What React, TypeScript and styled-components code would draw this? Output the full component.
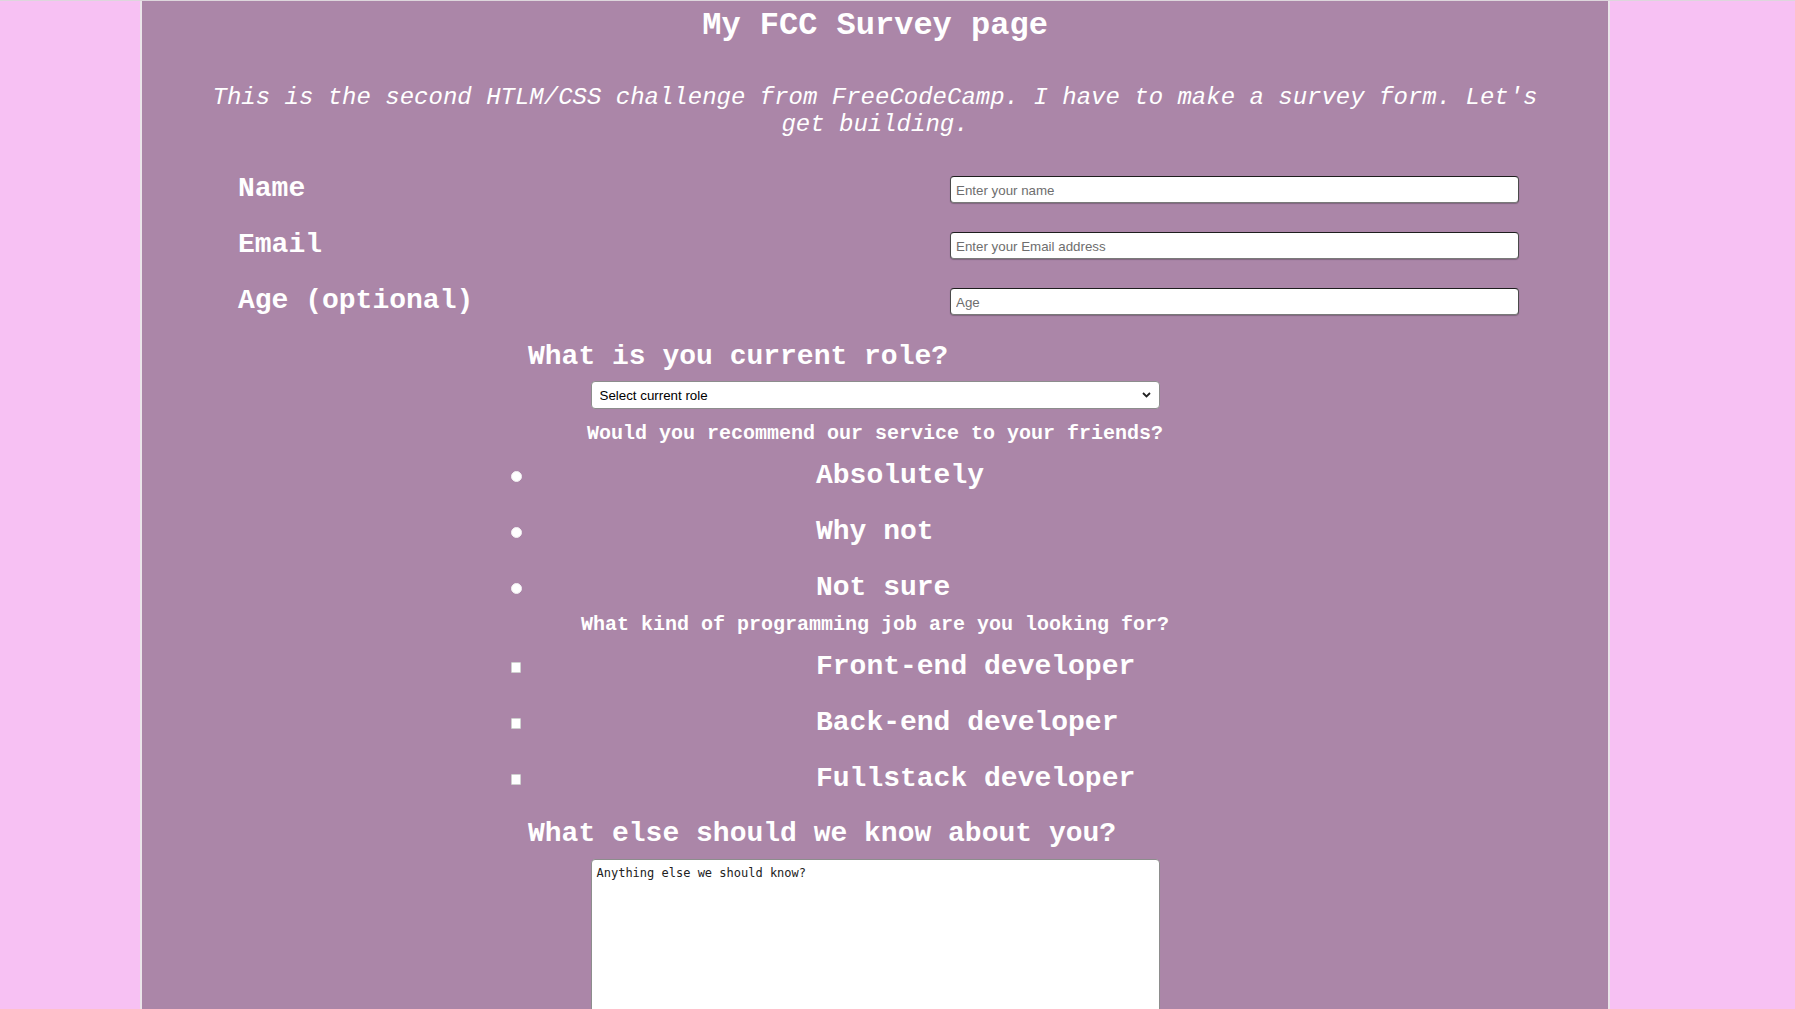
import React from "react";
import styled, { createGlobalStyle } from "styled-components";

const GlobalStyle = createGlobalStyle`
  html, body {
    margin: 0;
    padding: 0;
  }
  body {
    background: #f7c1f3;
    border-top: 1px solid #ddd6dc;
    font-family: "Liberation Mono", "Courier New", monospace;
    color: #ffffff;
  }
`;

const Page = styled.main`
  box-sizing: border-box;
  margin: 0 185px 0 140px;
  min-height: 1120px;
  padding: 7px 0 40px;
  background: #ab86a8;
  border-left: 2px solid #ebe4ea;
  border-right: 2px solid #ebe4ea;
`;

const Title = styled.h1`
  margin: 0;
  font-size: 32px;
  line-height: 36px;
  font-weight: bold;
  text-align: center;
`;

const Intro = styled.p`
  margin: 40px 50px 0;
  font-size: 24px;
  line-height: 27px;
  font-style: italic;
  text-align: center;
`;

const Form = styled.form`
  margin-top: 33px;
`;

const FieldRow = styled.div`
  box-sizing: border-box;
  display: grid;
  grid-template-columns: 1fr 569px;
  height: 56px;
  padding: 0 89px 0 96px;
`;

const FieldLabel = styled.label`
  padding-top: 2px;
  font-size: 28px;
  line-height: 32px;
  font-weight: bold;
`;

const TextInput = styled.input`
  box-sizing: border-box;
  margin-top: 5px;
  height: 27px;
  padding: 1px 5px 0;
  background: #fff;
  border: 1px solid #4a4a4a;
  border-top-color: #1e1e1e;
  border-bottom-color: #7a7a7a;
  border-radius: 4px;
  box-shadow: 0 1px 1px rgba(0, 0, 0, 0.25);
  font-family: "Liberation Sans", Arial, sans-serif;
  font-size: 13.33px;
  color: #222;
  &::placeholder {
    color: #6e6e6e;
  }
`;

const SectionHeading = styled.h2`
  margin: 0;
  padding: 4px 0 0 386px;
  font-size: 28px;
  line-height: 28px;
  font-weight: bold;
`;

const SelectWrap = styled.div`
  position: relative;
  width: 569px;
  height: 28px;
  margin: 10px auto 0;
`;

const RoleSelect = styled.select`
  box-sizing: border-box;
  appearance: none;
  -webkit-appearance: none;
  width: 100%;
  height: 28px;
  padding: 1px 8px 0;
  background: #fff;
  border: 1px solid #8d8d8d;
  border-radius: 4px;
  font-family: "Liberation Sans", Arial, sans-serif;
  font-size: 13.33px;
  color: #000;
`;

const Chevron = styled.svg`
  position: absolute;
  right: 9px;
  top: 11px;
  width: 9px;
  height: 6px;
  pointer-events: none;
`;

const Question = styled.p<{ $top: number }>`
  margin: ${(p) => p.$top}px 0 0;
  padding-top: 4px;
  font-size: 20px;
  line-height: 19px;
  font-weight: bold;
  text-align: center;
`;

const OptionList = styled.ul<{ $bottom: number }>`
  list-style: none;
  display: flex;
  flex-direction: column;
  gap: 24px;
  margin: 15px 0 ${(p) => p.$bottom}px;
  padding: 0 0 0 369px;
`;

const OptionItem = styled.li`
  box-sizing: border-box;
  display: flex;
  align-items: center;
  height: 32px;
  padding-top: 4px;
  font-size: 28px;
  line-height: 28px;
  font-weight: bold;
`;

const Marker = styled.span<{ $shape: "circle" | "square" }>`
  flex: none;
  box-sizing: border-box;
  width: ${(p) => (p.$shape === "circle" ? "11px" : "10px")};
  height: ${(p) => (p.$shape === "circle" ? "11px" : "11px")};
  margin-right: ${(p) => (p.$shape === "circle" ? "294px" : "295px")};
  background: #fff;
  border: 1px solid ${(p) => (p.$shape === "circle" ? "#f1eef1" : "#cfcfcf")};
  border-radius: ${(p) => (p.$shape === "circle" ? "50%" : "1px")};
`;

const Notes = styled.textarea`
  display: block;
  box-sizing: border-box;
  width: 569px;
  height: 220px;
  margin: 11px auto 0;
  padding: 6px 5px 4px;
  background: #fff;
  border: 1px solid #8d8d8d;
  border-radius: 4px;
  font-family: "DejaVu Sans Mono", "Liberation Mono", monospace;
  font-size: 12px;
  line-height: 15px;
  color: #222;
  resize: none;
`;

const fields = [
  { id: "name", label: "Name", placeholder: "Enter your name", type: "text" },
  { id: "email", label: "Email", placeholder: "Enter your Email address", type: "email" },
  { id: "age", label: "Age (optional)", placeholder: "Age", type: "number" },
];

const recommend = ["Absolutely", "Why not", "Not sure"];
const jobs = ["Front-end developer", "Back-end developer", "Fullstack developer"];

export default function App() {
  return (
    <>
      <GlobalStyle />
      <Page>
        <Title>My FCC Survey page</Title>
        <Intro>
          This is the second HTLM/CSS challenge from FreeCodeCamp. I have to make a survey form.
          Let's get building.
        </Intro>
        <Form onSubmit={(e) => e.preventDefault()}>
          {fields.map((f) => (
            <FieldRow key={f.id}>
              <FieldLabel htmlFor={f.id}>{f.label}</FieldLabel>
              <TextInput id={f.id} type={f.type} placeholder={f.placeholder} />
            </FieldRow>
          ))}
          <SectionHeading>What is you current role?</SectionHeading>
          <SelectWrap>
            <RoleSelect defaultValue="">
              <option value="">Select current role</option>
              <option value="student">Student</option>
              <option value="fulltime">Full time job</option>
              <option value="other">Other</option>
            </RoleSelect>
            <Chevron viewBox="0 0 9 6">
              <path d="M1 1 L4.5 4.5 L8 1" fill="none" stroke="#222" strokeWidth="1.8" />
            </Chevron>
          </SelectWrap>
          <Question $top={11}>Would you recommend our service to your friends?</Question>
          <OptionList $bottom={9}>
            {recommend.map((r) => (
              <OptionItem key={r}>
                <Marker $shape="circle" />
                {r}
              </OptionItem>
            ))}
          </OptionList>
          <Question $top={0}>What kind of programming job are you looking for?</Question>
          <OptionList $bottom={23}>
            {jobs.map((j) => (
              <OptionItem key={j}>
                <Marker $shape="square" />
                {j}
              </OptionItem>
            ))}
          </OptionList>
          <SectionHeading>What else should we know about you?</SectionHeading>
          <Notes defaultValue="Anything else we should know?" />
        </Form>
      </Page>
    </>
  );
}
